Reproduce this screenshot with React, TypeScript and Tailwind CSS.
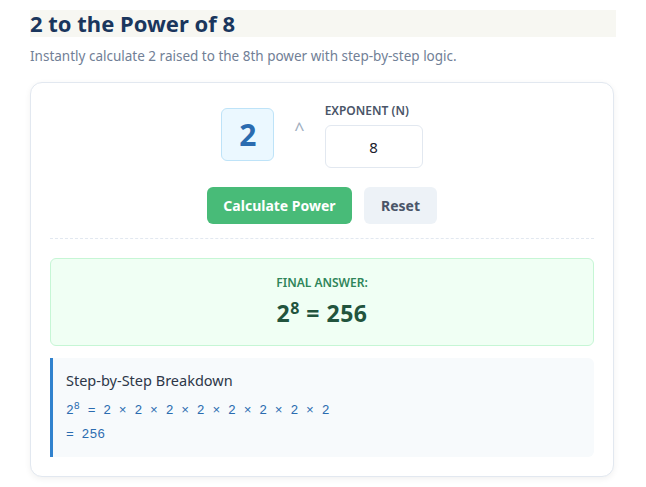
import { useState } from "react"

const sans = "font-['Segoe_UI','Noto_Sans','Open_Sans',sans-serif]"

export default function App() {
  const [exp, setExp] = useState("8")
  const n = 8

  return (
    <div className={`${sans} bg-white min-h-[487px] px-[30px] pt-[10px]`}>
      <h1 className="bg-[#f7f7f2] text-[22px] leading-[27px] font-bold text-[#1a365d]">
        2 to the Power of 8
      </h1>
      <p className="mt-[9px] text-[13.5px] text-[#718096]">
        Instantly calculate 2 raised to the 8th power with step-by-step logic.
      </p>

      <div className="mt-[16px] w-[584px] rounded-xl border border-[#e2e8f0] bg-white px-[19px] pt-[19px] pb-[19px] shadow-[0_2px_6px_rgba(0,0,0,0.06)]">
        <div className="flex items-end justify-center gap-[14px]">
          <div className="mb-[7px] flex h-[53px] w-[53px] items-center justify-center rounded-md border border-[#bee3f8] bg-[#ebf8ff] text-[30px] font-bold text-[#2b6cb0]">
            2
          </div>
          <div className="mb-[25px] px-[6px] text-[18px] text-[#a0aec0]">^</div>
          <div className="flex flex-col">
            <label className="mb-[5px] text-[12px] font-semibold text-[#4a5568]">EXPONENT (N)</label>
            <input
              value={exp}
              onChange={(e) => setExp(e.target.value)}
              className="h-[43px] w-[98px] rounded-md border border-[#e2e8f0] text-center text-[15px] text-[#1a202c] outline-none"
            />
          </div>
        </div>

        <div className="mt-[19px] flex justify-center gap-[12px]">
          <button className="h-[37px] w-[145px] rounded-md bg-[#48bb78] text-[14px] font-bold text-white">
            Calculate Power
          </button>
          <button className="h-[37px] w-[73px] rounded-md bg-[#edf2f7] text-[14px] font-bold text-[#4a5568]">
            Reset
          </button>
        </div>

        <div className="mt-[14px] border-t border-dashed border-[#e2e8f0]" />

        <div className="mt-[19px] flex h-[88px] flex-col items-center justify-center rounded-md border border-[#c6f6d5] bg-[#f0fff4]">
          <div className="text-[12px] font-semibold text-[#2f855a]">FINAL ANSWER:</div>
          <div className="mt-[4px] text-[23px] font-bold tracking-[0.5px] text-[#22543d]">
            2<sup className="text-[16px]">{n}</sup> = 256
          </div>
        </div>

        <div className="mt-[12px] rounded-md rounded-l-none border-l-[3px] border-[#3182ce] bg-[#f7fafc] pl-[13px] pt-[12px] pb-[10px]">
          <div className="text-[14.5px] text-[#2d3748]">Step-by-Step Breakdown</div>
          <div className="mt-[7px] font-['Liberation_Mono','DejaVu_Sans_Mono',monospace] text-[13px] leading-[24px] text-[#2b6cb0]">
            <div>
              2<sup className="text-[10px]">8</sup> = 2 × 2 × 2 × 2 × 2 × 2 × 2 × 2
            </div>
            <div>= 256</div>
          </div>
        </div>
      </div>
    </div>
  )
}
